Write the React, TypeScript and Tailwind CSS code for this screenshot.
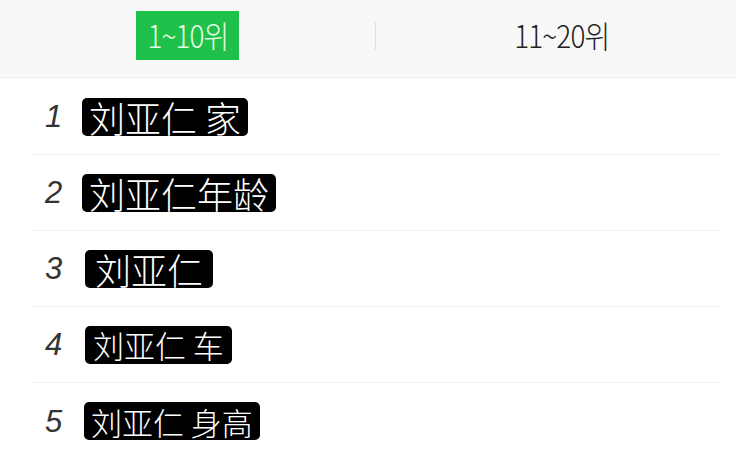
import React from "react";

const rows = [
  { n: "1", t: "刘亚仁 家", cls: "text-[36px] px-[7px]" },
  { n: "2", t: "刘亚仁年龄", cls: "text-[36px] px-[7px]" },
  { n: "3", t: "刘亚仁", cls: "text-[36px] px-[10px] ml-[3px]" },
  { n: "4", t: "刘亚仁 车", cls: "text-[31px] px-[8px] ml-[3px]" },
  { n: "5", t: "刘亚仁 身高", cls: "text-[31px] px-[7px] ml-[2px]" },
];

export default function App() {
  const kr = { fontFamily: '"Noto Sans CJK KR", "Noto Sans", sans-serif' };
  const cn = { fontFamily: '"Noto Sans CJK SC", "Noto Sans", sans-serif' };
  return (
    <div className="w-[736px] h-[458px] bg-white overflow-hidden">
      <div className="h-[78px] bg-[#f8f8f8] border-b border-[#ececec] flex items-center pb-[6px]">
        <div className="w-[375px] flex justify-center">
          <div className="h-[49px] w-[103px] bg-[#1fc14a] flex items-center justify-center overflow-hidden">
            <span
              className="text-[#e6ffe6] text-[31px] tracking-[-1px] font-light scale-x-[0.9] whitespace-nowrap"
              style={kr}
            >
              1~10위
            </span>
          </div>
        </div>
        <div className="w-px h-[28px] bg-[#e2e2e2]" />
        <div className="flex-1 flex justify-center pl-[12px]">
          <span
            className="text-[#222] text-[31px] tracking-[-1px] font-light scale-x-[0.9] whitespace-nowrap"
            style={kr}
          >
            11~20위
          </span>
        </div>
      </div>
      <div className="pl-[32px] pr-[16px] pt-[1px]">
        {rows.map((r, i) => (
          <div
            key={r.n}
            className={`h-[76px] flex items-center ${i < rows.length - 1 ? "border-b border-[#efefef]" : ""}`}
          >
            <span
              className="w-[50px] pl-[13px] italic text-[31px] text-[#333] leading-none"
              style={{ fontFamily: '"Liberation Sans", Arial, sans-serif' }}
            >
              {r.n}
            </span>
            <span
              className={`bg-black text-white rounded-[5px] h-[38px] flex items-center leading-none whitespace-pre font-light ${r.cls}`}
              style={cn}
            >
              {r.t}
            </span>
          </div>
        ))}
      </div>
    </div>
  );
}
